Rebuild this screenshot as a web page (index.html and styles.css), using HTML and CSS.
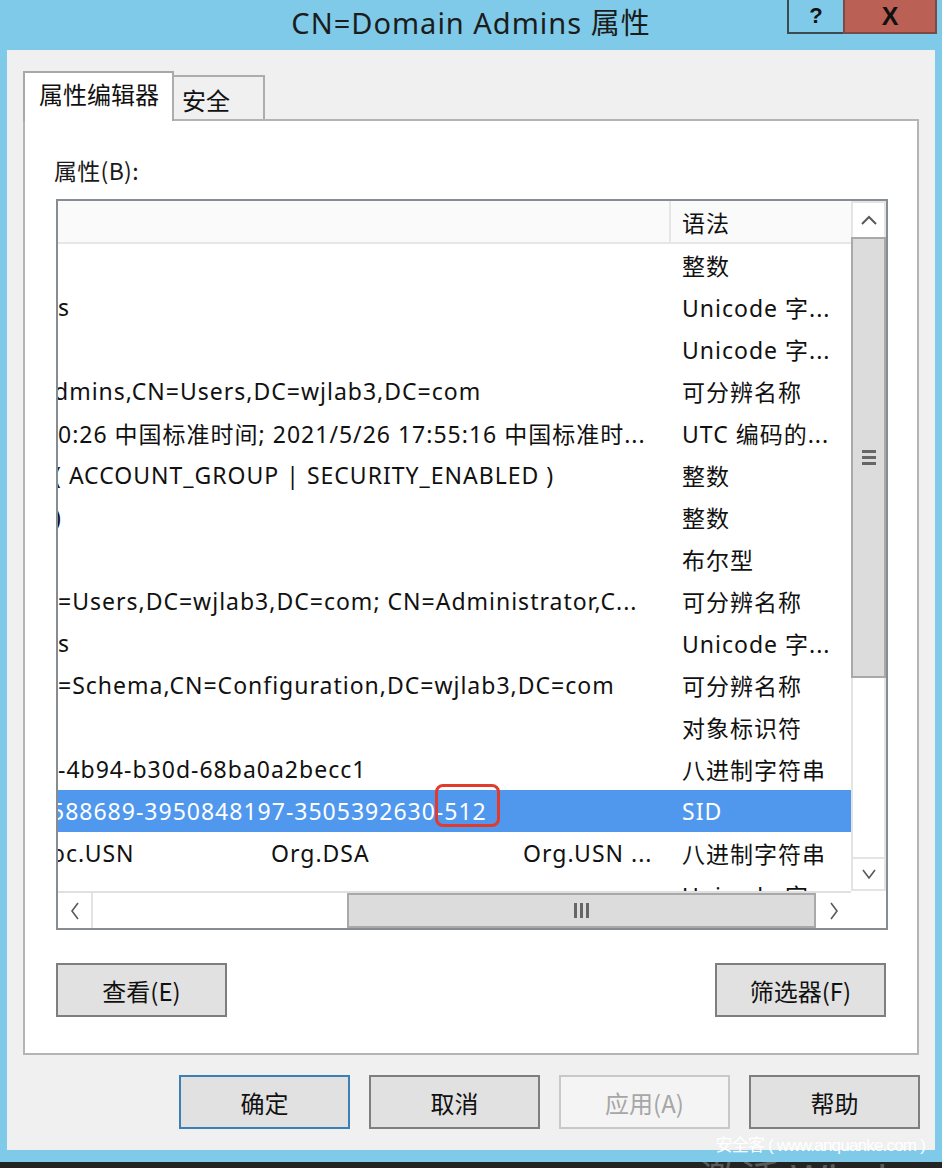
FILE: index.html
```html
<!DOCTYPE html>
<html lang="zh-CN">
<head>
<meta charset="utf-8">
<title>CN=Domain Admins 属性</title>
<link rel="stylesheet" href="styles.css">
</head>
<body>
<div class="screen">
  <header class="titlebar">
    <div class="tb-spacer"></div>
    <div class="title">CN=Domain Admins 属性</div>
    <div class="caption-btns">
      <div class="cbtn help">?</div>
      <div class="cbtn close">X</div>
    </div>
  </header>

  <div class="window">
    <div class="tabs">
      <div class="tab active">属性编辑器</div>
      <div class="tab">安全</div>
    </div>

    <div class="panel">
      <div class="label">属性(B):</div>

      <div class="listbox">
        <div class="viewport">
          <div class="row header"><div class="c1"></div><div class="c2">语法</div></div>
          <div class="row"><div class="c1"></div><div class="c2">整数</div></div>
          <div class="row"><div class="c1">s</div><div class="c2">Unicode 字...</div></div>
          <div class="row"><div class="c1"></div><div class="c2">Unicode 字...</div></div>
          <div class="row"><div class="c1"><span class="clip4">dmins,CN=Users,DC=wjlab3,DC=com</span></div><div class="c2">可分辨名称</div></div>
          <div class="row"><div class="c1">0:26 中国标准时间; 2021/5/26 17:55:16 中国标准时...</div><div class="c2">UTC 编码的...</div></div>
          <div class="row"><div class="c1"><span class="clip4">( ACCOUNT_GROUP | SECURITY_ENABLED )</span></div><div class="c2">整数</div></div>
          <div class="row"><div class="c1"><span class="clip4">)</span></div><div class="c2">整数</div></div>
          <div class="row"><div class="c1"></div><div class="c2">布尔型</div></div>
          <div class="row"><div class="c1">=Users,DC=wjlab3,DC=com; CN=Administrator,C...</div><div class="c2">可分辨名称</div></div>
          <div class="row"><div class="c1">s</div><div class="c2">Unicode 字...</div></div>
          <div class="row"><div class="c1">=Schema,CN=Configuration,DC=wjlab3,DC=com</div><div class="c2">可分辨名称</div></div>
          <div class="row"><div class="c1"></div><div class="c2">对象标识符</div></div>
          <div class="row"><div class="c1">-4b94-b30d-68ba0a2becc1</div><div class="c2">八进制字符串</div></div>
          <div class="row selected"><div class="c1"><span class="clip6">588689-3950848197-3505392630-<span class="mark">512</span></span></div><div class="c2">SID</div></div>
          <div class="row"><div class="c1 multi"><span class="m1"><span class="clip6">oc.USN</span></span><span class="m2">Org.DSA</span><span class="m3">Org.USN ...</span></div><div class="c2">八进制字符串</div></div>
          <div class="row"><div class="c1"></div><div class="c2">Unicode 字...</div></div>
        </div>

        <div class="vscroll">
          <div class="sbtn up">
            <svg width="16" height="10" viewBox="0 0 16 10"><polyline points="1,9 8,2 15,9" fill="none" stroke="#5a5a5a" stroke-width="2"/></svg>
          </div>
          <div class="vthumb">
            <div class="vgrip"><i></i><i></i><i></i></div>
          </div>
          <div class="vtrack"></div>
          <div class="sbtn down">
            <svg width="14" height="10" viewBox="0 0 14 10"><polyline points="1,1 7,9 13,1" fill="none" stroke="#5a5a5a" stroke-width="1.6"/></svg>
          </div>
        </div>

        <div class="hscroll">
          <div class="sbtn left">
            <svg width="10" height="18" viewBox="0 0 10 18"><polyline points="8,1 2,9 8,17" fill="none" stroke="#5a5a5a" stroke-width="1.6"/></svg>
          </div>
          <div class="htrack"></div>
          <div class="hthumb">
            <div class="hgrip"><i></i><i></i><i></i></div>
          </div>
          <div class="sbtn right">
            <svg width="10" height="18" viewBox="0 0 10 18"><polyline points="2,1 8,9 2,17" fill="none" stroke="#5a5a5a" stroke-width="1.6"/></svg>
          </div>
        </div>
        <div class="corner"></div>
      </div>

      <div class="panel-btns">
        <button class="btn">查看(E)</button>
        <button class="btn">筛选器(F)</button>
      </div>
    </div>

    <div class="dialog-btns">
      <button class="btn default">确定</button>
      <button class="btn">取消</button>
      <button class="btn disabled">应用(A)</button>
      <button class="btn">帮助</button>
    </div>
  </div>

  <div class="blue-gap"></div>
  <div class="taskbar"><span class="activate">激活 Windows</span></div>
  <div class="watermark">安全客 ( www.anquanke.com )</div>
</div>
</body>
</html>
```

FILE: styles.css
```css
* { box-sizing: border-box; }

html, body {
  margin: 0;
  padding: 0;
}

body {
  width: 942px;
  height: 1168px;
  overflow: hidden;
  background: #7ecae8;
  font-family: "Noto Sans", "Noto Sans CJK SC", sans-serif;
  color: #1a1a1a;
}

.screen {
  position: relative;
  width: 942px;
  height: 1168px;
  display: flex;
  flex-direction: column;
}

/* ---------- title bar ---------- */
.titlebar {
  height: 50px;
  display: grid;
  grid-template-columns: 1fr auto 1fr;
  align-items: start;
}

.title {
  font-size: 29px;
  line-height: 45px;
  color: #1c1c1c;
  letter-spacing: 1px;
}

.caption-btns {
  justify-self: end;
  display: flex;
  margin-right: 5px;
}

.cbtn {
  height: 34px;
  display: flex;
  align-items: center;
  justify-content: center;
  font-family: "Liberation Sans", sans-serif;
  font-weight: bold;
  color: #111;
  border: 2px solid #3d4a52;
  border-top: none;
}

.cbtn.help {
  width: 56px;
  font-size: 22px;
  background: #7ecae8;
  border-right: none;
}

.cbtn.close {
  width: 94px;
  font-size: 25px;
  background: #bb6055;
  border-color: #7a4a44;
}

/* ---------- window body ---------- */
.window {
  margin: 0 7px;
  height: 1100px;
  background: #f0f0f0;
  padding: 21px 16px 0 16px;
  display: flex;
  flex-direction: column;
}

.tabs {
  display: flex;
  align-items: flex-end;
  height: 48px;
  position: relative;
  z-index: 2;
}

.tab {
  font-family: "Noto Sans CJK SC", sans-serif;
  font-size: 24px;
  color: #111;
  border: 2px solid #a8a8a8;
  border-bottom: none;
}

.tab.active {
  width: 151px;
  height: 50px;
  margin-bottom: -2px;
  background: #ffffff;
  padding: 3px 0 0 14px;
}

.tab:not(.active) {
  width: 93px;
  height: 44px;
  margin-left: -2px;
  background: #f0f0f0;
  padding: 5px 0 0 8px;
  border-color: #adadad;
}

.panel {
  width: 896px;
  height: 936px;
  background: #ffffff;
  border: 2px solid #b4b4b4;
  padding: 34px 31px 0 29px;
  display: flex;
  flex-direction: column;
}

.label {
  font-family: "Noto Sans CJK SC", sans-serif;
  font-size: 23px;
  line-height: 30px;
  letter-spacing: 0.3px;
  color: #1a1a1a;
}

/* ---------- list box ---------- */
.listbox {
  margin-top: 14px;
  margin-left: 2px;
  width: 832px;
  height: 731px;
  border: 2px solid #878b92;
  display: grid;
  grid-template-columns: 793px 35px;
  grid-template-rows: 690px 37px;
}

.viewport {
  overflow: hidden;
  background: #fff;
}

.row {
  display: flex;
  height: 42px;
  align-items: center;
  font-size: 23px;
  letter-spacing: 1px;
  white-space: nowrap;
  color: #111;
}

.row .c1 {
  width: 613px;
  overflow: hidden;
  flex: none;
}

.row .c2 {
  padding-left: 11px;
  overflow: hidden;
  flex: 1;
}

.row.header {
  background: #fafafa;
  border-bottom: 2px solid #e6e6e6;
  height: 43px;
}

.row.header .c1 {
  height: 100%;
  border-right: 2px solid #e6e6e6;
}

.row.header .c2 {
  font-family: "Noto Sans CJK SC", sans-serif;
}

.clip4 { margin-left: -4px; display: inline-block; }
.clip6 { margin-left: -7px; display: inline-block; }

.row.selected {
  background: #4f98ee;
  color: #ffffff;
}

.row.selected .c1 { overflow: visible; }

.mark {
  position: relative;
  display: inline-block;
  line-height: 30px;
}

.mark::after {
  content: "";
  position: absolute;
  left: -9px;
  right: -13px;
  top: -12px;
  bottom: -1px;
  border: 3px solid #e23a2b;
  border-radius: 8px;
}

.multi { display: flex; }
.multi .m1 { width: 213px; overflow: hidden; }
.multi .m2 { width: 252px; }

/* ---------- scrollbars ---------- */
.vscroll {
  display: flex;
  flex-direction: column;
  background: #fff;
}

.sbtn {
  display: flex;
  align-items: center;
  justify-content: center;
  background: #fff;
  flex: none;
}

.vscroll .sbtn { height: 36px; }
.vscroll .up { border: 2px solid #e4e4e4; border-bottom: none; }
.vscroll .down { border: 2px solid #e4e4e4; height: 34px; }

.vthumb {
  height: 441px;
  background: #dcdcdc;
  border: 2px solid #a9a9a9;
  display: flex;
  align-items: center;
  justify-content: center;
}

.vgrip {
  display: flex;
  flex-direction: column;
  gap: 3px;
}

.vgrip i {
  display: block;
  width: 14px;
  height: 3px;
  background: #666;
}

.vtrack {
  flex: 1;
  border-left: 2px solid #e4e4e4;
  border-right: 2px solid #e4e4e4;
}

.hscroll {
  display: flex;
  border-top: 2px solid #e0e0e0;
  background: #fff;
}

.hscroll .sbtn { width: 35px; }
.hscroll .left { border-right: 2px solid #e4e4e4; }

.htrack { width: 254px; }

.hthumb {
  width: 469px;
  background: #dcdcdc;
  border: 2px solid #a9a9a9;
  display: flex;
  align-items: center;
  justify-content: center;
}

.hgrip {
  display: flex;
  gap: 3px;
}

.hgrip i {
  display: block;
  width: 3px;
  height: 15px;
  background: #666;
}

.corner {
  background: #fff;
}

/* ---------- buttons ---------- */
.btn {
  width: 171px;
  height: 54px;
  background: #e1e1e1;
  border: 2px solid #7e7e7e;
  font-family: "Noto Sans CJK SC", sans-serif;
  font-size: 24px;
  color: #111;
  padding: 0;
  margin: 0;
}

.panel-btns {
  margin-top: 33px;
  margin-left: 2px;
  display: flex;
  justify-content: space-between;
}

.dialog-btns {
  margin-top: 20px;
  margin-right: -1px;
  display: flex;
  justify-content: flex-end;
  gap: 19px;
}

.btn.default { border-color: #3c7fb5; }

.btn.disabled {
  background: #f4f4f4;
  border-color: #c8c8c8;
  color: #a6a6a6;
}

/* ---------- bottom ---------- */
.blue-gap {
  height: 12px;
}

.taskbar {
  height: 6px;
  background: #232323;
  overflow: hidden;
}

.activate {
  display: block;
  margin-left: 700px;
  font-size: 40px;
  line-height: 6px;
  padding-top: 14px;
  color: #5a5a5a;
  white-space: nowrap;
}

.watermark {
  position: absolute;
  right: 17px;
  bottom: 12px;
  font-family: "Liberation Sans", "Noto Sans CJK SC", sans-serif;
  font-size: 17px;
  letter-spacing: -0.8px;
  color: #ffffff;
  white-space: nowrap;
}
```
